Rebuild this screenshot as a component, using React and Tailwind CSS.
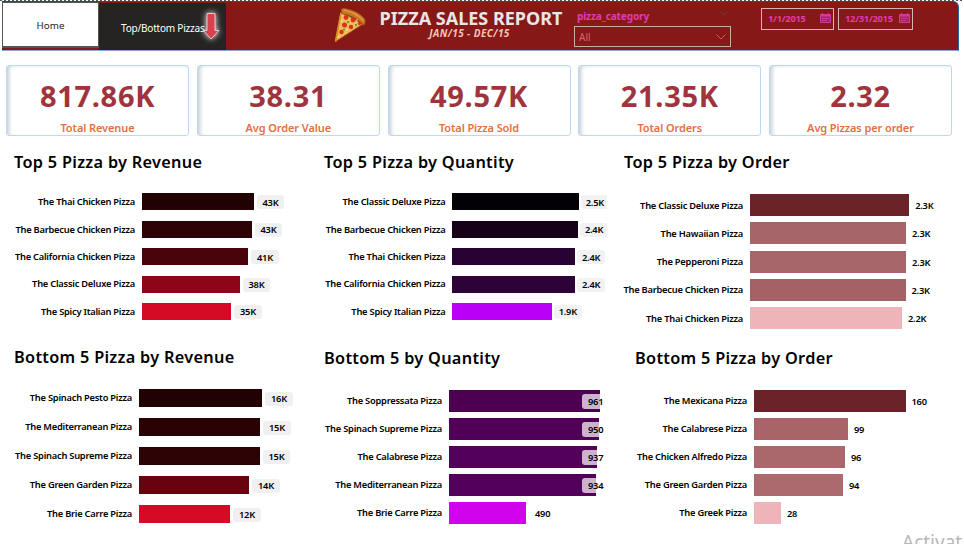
import React from 'react';

const kpis = [
  ['817.86K', 'Total Revenue'],
  ['38.31', 'Avg Order Value'],
  ['49.57K', 'Total Pizza Sold'],
  ['21.35K', 'Total Orders'],
  ['2.32', 'Avg Pizzas per order'],
];

const charts = [
  {
    title: 'Top 5 Pizza by Revenue', head: 'pl-[14px] h-[43.2px] pt-[5px]', label: 'w-[135px]', row: 'h-[27.4px]', bar: 'h-[17px]', badge: 'ml-[3px] px-[6px] bg-[#f0f0f0]', column: 'w-[310px]',
    rows: [['The Thai Chicken Pizza', '43K', 111.5, '#210102'], ['The Barbecue Chicken Pizza', '43K', 109.5, '#2d0204'], ['The California Chicken Pizza', '41K', 106, '#480209'], ['The Classic Deluxe Pizza', '38K', 97.5, '#8c0518'], ['The Spicy Italian Pizza', '35K', 89, '#d50a25']],
  },
  {
    title: 'Top 5 Pizza by Quantity', head: 'pl-[14px] h-[43.2px] pt-[5px]', label: 'w-[135.4px]', row: 'h-[27.4px]', bar: 'h-[17px]', badge: 'ml-[2px] px-[5px] bg-[#f2f2f2]', column: 'w-[297px] mr-[3px]',
    rows: [['The Classic Deluxe Pizza', '2.5K', 126.4, '#020106'], ['The Barbecue Chicken Pizza', '2.4K', 125.5, '#160118'], ['The Thai Chicken Pizza', '2.4K', 122.6, '#280232'], ['The California Chicken Pizza', '2.4K', 122.6, '#2c0237'], ['The Spicy Italian Pizza', '1.9K', 99.3, '#bb00f8']],
  },
  {
    title: 'Top 5 Pizza by Order', head: 'pl-[14px] h-[46px] pt-[5px]', label: 'w-[133px]', row: 'h-[28.3px]', bar: 'h-[22px]', badge: 'ml-[6px]', column: 'w-[354px]',
    rows: [['The Classic Deluxe Pizza', '2.3K', 159.2, '#6b2228'], ['The Hawaiian Pizza', '2.3K', 156, '#a66569'], ['The Pepperoni Pizza', '2.3K', 156, '#a7666a'], ['The Barbecue Chicken Pizza', '2.3K', 155.5, '#a56266'], ['The Thai Chicken Pizza', '2.2K', 152, '#efb4b9']],
  },
  {
    title: 'Bottom 5 Pizza by Revenue', head: 'pl-[14px] h-[43.5px] pt-[5px]', label: 'w-[132px]', row: 'h-[29px]', bar: 'h-[18px]', badge: 'ml-[3px] px-[6px] bg-[#f0f0f0]', column: 'w-[310px]',
    rows: [['The Spinach Pesto Pizza', '16K', 123, '#210102'], ['The Mediterranean Pizza', '15K', 121, '#2a0204'], ['The Spinach Supreme Pizza', '15K', 120.5, '#2c0204'], ['The Green Garden Pizza', '14K', 110, '#66030f'], ['The Brie Carre Pizza', '12K', 91, '#d60a24']],
  },
  {
    title: 'Bottom 5 by Quantity', head: 'pl-[14px] h-[47px] pt-[6px]', label: 'w-[132px]', row: 'h-[28px]', bar: 'h-[22px]', badge: 'ml-[9px]', column: 'w-[300px]', inside: true,
    rows: [['The Soppressata Pizza', '961', 151.4, '#4d0052'], ['The Spinach Supreme Pizza', '950', 150, '#500057'], ['The Calabrese Pizza', '937', 148, '#52005a'], ['The Mediterranean Pizza', '934', 147, '#52005a'], ['The Brie Carre Pizza', '490', 77, '#d003ec']],
  },
  {
    title: 'Bottom 5 Pizza by Order', head: 'pl-[25px] h-[47px] pt-[6px]', label: 'w-[137px]', row: 'h-[28px]', bar: 'h-[22px]', badge: 'ml-[6px]', column: 'w-[354px]',
    rows: [['The Mexicana Pizza', '160', 151.5, '#6b2228'], ['The Calabrese Pizza', '99', 94, '#a86468'], ['The Chicken Alfredo Pizza', '96', 91, '#ab686c'], ['The Green Garden Pizza', '94', 89, '#ac6a6e'], ['The Greek Pizza', '28', 27, '#efb4b9']],
  },
];

function BarChart({ chart }) {
  return (
    <section className={`${chart.column} shrink-0 overflow-hidden`}>
      <h2 className={`${chart.head} whitespace-nowrap text-[16.3px] font-semibold leading-6 tracking-[0.3px]`}>{chart.title}</h2>
      {chart.rows.map(([name, value, width, color]) => (
        <div key={name} className={`${chart.row} flex items-center whitespace-nowrap text-[9.3px] font-semibold leading-none tracking-[-0.23px]`}>
          <span className={`${chart.label} shrink-0 text-right`}>{name}</span>
          <span className={`${chart.bar} relative ml-[7px] shrink-0`} style={{ width, backgroundColor: color }}>
            {chart.inside && width > 100 && (
              <span className="absolute left-[133px] top-[4px] flex h-[15px] w-[26px] items-center rounded-[3px] bg-white/70 pl-[6px]">{value}</span>
            )}
          </span>
          {!(chart.inside && width > 100) && (
            <span className={`${chart.badge} mt-px flex h-[14px] shrink-0 items-center rounded-[3px]`}>{value}</span>
          )}
        </div>
      ))}
    </section>
  );
}

function PizzaSlice() {
  return (
    <svg className="h-[36px] w-[34px]" viewBox="0 0 34 36">
      <path d="M8 5 L30 17 L2.500 34.500 Z" fill="#f0bd58" stroke="#a85a16" strokeWidth="1" />
      <path d="M8 2.500 Q10 0 13 1.500 Q26 4 32 12 Q33 16 31 18.500 Q22 9 8.500 6.500 Z" fill="#cf7424" stroke="#7d3a12" strokeWidth=".7" />
      <path d="M11 3 Q23 5.500 30.500 14" fill="none" stroke="#eca24a" strokeWidth="1.1" />
      <path d="M8 6 L2.500 34.500" stroke="#d98f22" strokeWidth="1.6" />
      <g fill="#d9331f"><circle cx="13" cy="10.500" r="2.400" /><circle cx="20" cy="13" r="2.400" /><circle cx="11.500" cy="18" r="2.500" /><circle cx="18" cy="20" r="2.200" /><circle cx="8.500" cy="25" r="2.200" /><circle cx="26.500" cy="16.500" r="1.700" /></g>
      <g fill="#4f8a2c"><circle cx="17" cy="9" r="1" /><circle cx="15" cy="15" r="1" /><circle cx="23" cy="18" r="1" /><circle cx="11" cy="22.500" r=".9" /></g>
      <g fill="#fff0b5"><circle cx="24" cy="13" r=".8" /><circle cx="9" cy="14" r=".8" /><circle cx="14" cy="22.500" r=".8" /><circle cx="5.500" cy="30" r=".7" /></g>
    </svg>
  );
}

function Calendar() {
  return (
    <svg className="mb-[3px] h-[10px] w-[11px] shrink-0" viewBox="0 0 11 10" fill="none" stroke="#d1389c">
      <path d="M.5 1.500h10v8H.5z" fill="#a52461" />
      <path d="M.5 2.500h10" strokeWidth="2" />
      <path d="M2.500 0v2M8.500 0v2" />
      <path d="M2 5.500h7M2 7.500h5" strokeWidth=".9" />
    </svg>
  );
}

function Chevron({ className }) {
  return <svg className={className} viewBox="0 0 10 6" fill="none" stroke="currentColor"><path d="M.5.5 5 5 9.500.5" /></svg>;
}

export default function App() {
  return (
    <div className="relative flex h-[544px] w-[964px] flex-col overflow-hidden bg-white font-['Noto_Sans','Open_Sans',sans-serif] text-black">
      <div className="h-px shrink-0 bg-[repeating-linear-gradient(90deg,#555_0_2px,#fff_2px_4px)]" />
      <header className="ml-[2px] flex h-[50px] w-[957px] shrink-0 rounded-tr-[6px] border-b border-r border-t border-b-[#8fa3cf] border-r-[#2d62ab] border-t-[#30466f] bg-[#861818]">
        <div className="flex h-[46px] w-[97px] shrink-0 items-center justify-center border border-b-2 border-[#555] bg-white pt-[4px] text-[9.8px] text-[#252423]">Home</div>
        <div className="relative mt-px flex w-[127px] shrink-0 items-center bg-[#252423] pl-[22px] pt-[3px] text-[10px] tracking-[-0.2px] text-white">
          Top/Bottom Pizzas
          <svg className="absolute left-[98px] top-[4px] h-[40px] w-[28px] drop-shadow-[0_0_3px_#fff]" viewBox="0 0 28 40">
            <path d="M10 6.500h8v17h4L14 32 6.500 23.500H10z" fill="#d9414e" stroke="#f0c4c8" strokeWidth="1" />
          </svg>
        </div>
        <div className="ml-[107px] mt-[5px] w-[34px] shrink-0"><PizzaSlice /></div>
        <div className="ml-[12px] flex w-[184px] shrink-0 flex-col items-center whitespace-nowrap pt-[6px]">
          <h1 className="text-[18px] font-bold leading-[20px] text-[#e8e6e6]">PIZZA SALES REPORT</h1>
          <div className="-ml-[3px] text-[10px] font-bold italic leading-[10px] tracking-[0.4px] text-[#f3c4b4]">JAN/15 - DEC/15</div>
        </div>
        <div className="ml-[11px] w-[157px] shrink-0 pt-[5px]">
          <div className="flex h-[17px] items-center justify-between pl-[3px] pr-[3px] text-[10px] font-bold tracking-[-0.1px] text-[#e23caf]">
            <span className="pt-px">pizza_category</span>
            <Chevron className="mb-[4px] h-[5px] w-[8px] text-[#7a4a4a]" />
          </div>
          <div className="mt-[2px] flex h-[21px] items-center justify-between border border-[#cdaaaa] pl-[4px] pr-[4px] pt-px text-[10px] text-[#e0636e]">
            <span className="pt-px">All</span>
            <Chevron className="h-[6px] w-[10px] text-[#e0505c]" />
          </div>
        </div>
        <div className="ml-[30px] flex gap-[4px] pt-[6px] text-[9.300px] font-bold tracking-[-0.25px] text-[#e23caf]">
          <div className="flex h-[22px] w-[73px] items-center justify-between border border-[#d5b5b5] pl-[6px] pr-[2px]"><span>1/1/2015</span><Calendar /></div>
          <div className="flex h-[22px] w-[75px] items-center justify-between border border-[#d5b5b5] pl-[6px] pr-[2px]"><span>12/31/2015</span><Calendar /></div>
        </div>
      </header>
      <div className="ml-[6px] mt-[14px] flex h-[71px] shrink-0 gap-[7.75px]">
        {kpis.map(([value, label]) => (
          <div key={label} className="flex w-[183px] shrink-0 flex-col items-center rounded-[3px] border border-[#b9d9f6] pt-[13px] shadow-[inset_4px_1px_4px_-2px_#c4cad4]">
            <div className="text-[29px] font-bold leading-[34px] tracking-[0.7px] text-[#a0343c]">{value}</div>
            <div className="mt-[8px] text-[11px] font-semibold leading-[14px] tracking-[-0.1px] text-[#e2703f]">{label}</div>
          </div>
        ))}
      </div>
      <div className="mt-[9px] flex h-[195px] shrink-0">
        {charts.slice(0, 3).map((c) => <BarChart key={c.title} chart={c} />)}
      </div>
      <div className="flex h-[204px] shrink-0">
        {charts.slice(3).map((c) => <BarChart key={c.title} chart={c} />)}
      </div>
      <div className="absolute left-[902px] top-[529px] text-[19px] leading-[26px] text-[#b8b8b8]">Activat</div>
    </div>
  );
}
